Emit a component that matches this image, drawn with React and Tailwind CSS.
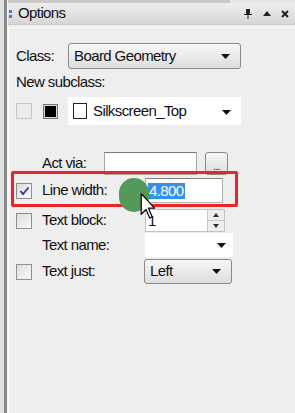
import React from 'react';

const font = { fontFamily: '"Liberation Sans", Arial, sans-serif' };

const Arrow = () => (
  <svg width="9" height="5" viewBox="0 0 9 5" className="shrink-0">
    <path d="M0 0 H9 L4.5 5 Z" fill="#111" />
  </svg>
);

const Check = ({ checked, disabled }) => (
  <div
    className={`w-[16px] h-[16px] shrink-0 border flex items-center justify-center ${
      disabled ? 'border-[#c4c4c4] bg-[#ececec]' : 'border-[#8e8f8f] bg-gradient-to-br from-[#dcdcdc] to-[#fbfbfb]'
    }`}
  >
    {checked && (
      <svg width="11" height="10" viewBox="0 0 11 10">
        <path d="M1.5 5 L4 8 L9.5 1.5" stroke="#2a3b8f" strokeWidth="1.8" fill="none" />
      </svg>
    )}
  </div>
);

const Combo = ({ children, className = '' }) => (
  <div
    className={`flex items-center justify-between pl-[5px] pr-[10px] border border-[#8a8a8a] rounded-[3px] bg-gradient-to-b from-[#f7f7f7] to-[#dedede] ${className}`}
  >
    <span>{children}</span>
    <Arrow />
  </div>
);

export default function App() {
  return (
    <div className="w-[295px] h-[413px] flex bg-[#efeeee] overflow-hidden text-[15px] tracking-[-0.6px] text-[#111] relative" style={font}>
      {/* left splitter */}
      <div className="w-[4px] bg-[#e2e2e2]" />
      <div className="w-[3px] bg-[#8b8b8b]" />
      <div className="w-[1px] bg-[#f6f6f6]" />

      <div className="flex-1 flex flex-col">
        <div className="h-[3px] flex">
          <div className="w-[222px] bg-[#c9c9c9]" />
          <div className="flex-1 bg-[#e6e6e6]" />
        </div>

        {/* title bar */}
        <div className="h-[22px] flex items-center bg-gradient-to-b from-[#eeeeee] to-[#d6d6d6] border-b border-[#c8c8c8]">
          <div className="ml-[1px] flex flex-col gap-[2px]">
            <div className="w-[3px] h-[3px] bg-[#3b7fd0]" />
            <div className="w-[3px] h-[3px] bg-[#3b7fd0]" />
          </div>
          <span className="ml-[6px] text-[15px]">Options</span>
          <div className="ml-auto mr-[6px] flex items-center gap-[10px]">
            <svg width="10" height="11" viewBox="0 0 10 11">
              <path d="M3 1 H7 V6 H9 V7 H1 V6 H3 Z M4.5 7 V11 H5.5 V7 Z" fill="#222" />
            </svg>
            <svg width="8" height="5" viewBox="0 0 8 5">
              <path d="M0 5 L4 0 L8 5 Z" fill="#222" />
            </svg>
            <svg width="8" height="8" viewBox="0 0 8 8">
              <path d="M1 1 L7 7 M7 1 L1 7" stroke="#222" strokeWidth="2" />
            </svg>
          </div>
        </div>

        {/* panel */}
        <div className="flex-1 mt-[2px] border-t border-l border-[#fbfbfb] pl-[7px] flex flex-col">
          <div className="mt-[15px] h-[26px] flex items-center">
            <span className="w-[52px]">Class:</span>
            <Combo className="w-[173px] h-[26px]">Board Geometry</Combo>
          </div>

          <div className="mt-[5px] h-[16px] leading-[16px]">New subclass:</div>

          <div className="mt-[7px] h-[28px] flex items-center">
            <Check disabled />
            <div className="ml-[11px] w-[15px] h-[15px] border border-[#777] bg-[#d8d8d8] flex items-center justify-center">
              <div className="w-[11px] h-[11px] bg-black" />
            </div>
            <div className="ml-[10px] w-[173px] h-[28px] bg-white flex items-center pl-[5px] pr-[10px]">
              <div className="w-[14px] h-[16px] border border-[#222] bg-white" />
              <span className="ml-[6px] text-[15px]">Silkscreen_Top</span>
              <span className="ml-auto mt-[2px]"><Arrow /></span>
            </div>
          </div>

          <div className="mt-[27px] h-[23px] flex items-center">
            <span className="ml-[26px] w-[62px]">Act via:</span>
            <div className="w-[93px] h-[23px] bg-white border border-[#a5a5a5] border-t-[#7a7a7a]" />
            <div className="ml-[8px] w-[23px] h-[23px] rounded-[3px] border border-[#8a8a8a] bg-gradient-to-b from-[#f7f7f7] to-[#dcdcdc] flex items-end justify-center text-[10px] leading-[14px]">...</div>
          </div>

          <div className="mt-[3px] h-[25px] flex items-center">
            <Check checked />
            <span className="ml-[10px] w-[103px]">Line width:</span>
            <div className="w-[78px] h-[25px] bg-white border border-[#b0b0b0] border-t-[#808080] flex items-center pl-[2px]">
              <span className="bg-[#3390f0] text-white px-[1px] leading-[16px]">4.800</span>
            </div>
          </div>

          <div className="mt-[6px] h-[23px] flex items-center">
            <Check />
            <span className="ml-[10px] w-[103px]">Text block:</span>
            <div className="w-[80px] h-[23px] bg-white border border-[#c2c2c2] flex">
              <span className="flex-1 pl-[2px] leading-[21px]">1</span>
              <div className="w-[17px] flex flex-col border-l border-[#c8c8c8]">
                <div className="flex-1 bg-[#eeeeee] flex items-center justify-center border-b border-[#c8c8c8]">
                  <svg width="6" height="4" viewBox="0 0 6 4"><path d="M0 4 L3 0 L6 4 Z" fill="#333" /></svg>
                </div>
                <div className="flex-1 bg-[#eeeeee] flex items-center justify-center">
                  <svg width="6" height="4" viewBox="0 0 6 4"><path d="M0 0 L3 4 L6 0 Z" fill="#333" /></svg>
                </div>
              </div>
            </div>
          </div>

          <div className="mt-[1px] h-[24px] flex items-center">
            <span className="ml-[26px] w-[103px]">Text name:</span>
            <div className="w-[88px] h-[24px] bg-white flex items-center justify-end pr-[7px]">
              <Arrow />
            </div>
          </div>

          <div className="mt-[2px] h-[25px] flex items-center">
            <Check />
            <span className="ml-[10px] w-[102px]">Text just:</span>
            <Combo className="w-[88px] h-[25px]">Left</Combo>
          </div>
        </div>
      </div>

      {/* annotation overlays */}
      <div className="absolute left-[11px] top-[171px] w-[227px] h-[36px] border-[3px] border-[#e8262a] rounded-[2px]" />
      <div className="absolute left-[119px] top-[178px] w-[30px] h-[34px] rounded-full bg-[#55995a]" />
      <svg className="absolute left-[140px] top-[192px]" width="17" height="30" viewBox="0 0 14 24">
        <path d="M1 1 V18 L5 14 L8 21 L10 20 L7 13 L12 13 Z" fill="#fff" stroke="#000" strokeWidth="1" strokeLinejoin="round" />
      </svg>
    </div>
  );
}
